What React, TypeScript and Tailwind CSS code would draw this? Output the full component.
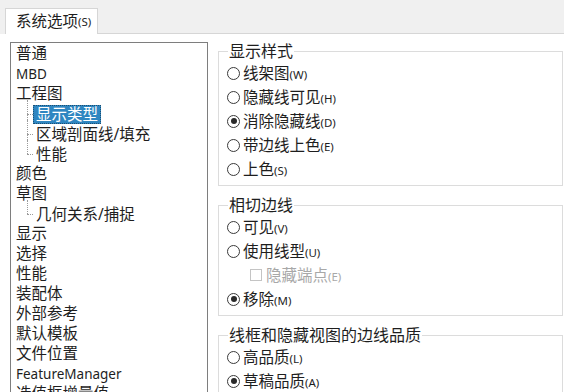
import React from "react";

type TreeItem = { label: string; small?: boolean; selected?: boolean; children?: TreeItem[] };

const TREE: TreeItem[] = [
  { label: "普通" },
  { label: "MBD", small: true },
  {
    label: "工程图",
    children: [{ label: "显示类型", selected: true }, { label: "区域剖面线/填充" }, { label: "性能" }],
  },
  { label: "颜色" },
  { label: "草图", children: [{ label: "几何关系/捕捉" }] },
  { label: "显示" },
  { label: "选择" },
  { label: "性能" },
  { label: "装配体" },
  { label: "外部参考" },
  { label: "默认模板" },
  { label: "文件位置" },
  { label: "FeatureManager", small: true },
  { label: "选值框增量值" },
];

function Label({ text, disabled }: { text: string; disabled?: boolean }) {
  const m = text.match(/^(.*)(\([A-Z]\))$/);
  const main = m ? m[1] : text;
  const key = m ? m[2] : "";
  return (
    <span className={disabled ? "text-[#a8a8a8]" : "text-[#1e1e1e]"}>
      <span className="text-[15.5px]">{main}</span>
      {key && <span className="text-[11.5px]">{key}</span>}
    </span>
  );
}

function Radio({ label, checked }: { label: string; checked?: boolean }) {
  return (
    <div className="flex h-6 items-center">
      <span className="mr-[3px] flex h-[13px] w-[13px] items-center justify-center rounded-full border border-[#3a3a3a] bg-white">
        {checked && <span className="h-[6px] w-[6px] rounded-full bg-[#2a2a2a]" />}
      </span>
      <Label text={label} />
    </div>
  );
}

function Group({ title, children }: { title: string; children: React.ReactNode }) {
  return (
    <fieldset className="border border-[#dcdcdc] pb-1 pl-2">
      <legend className="ml-px px-px text-[16px] leading-5 text-[#1e1e1e]">{title}</legend>
      {children}
    </fieldset>
  );
}

function ChildRow({ item, last }: { item: TreeItem; last: boolean }) {
  return (
    <div className="flex h-5 items-center">
      <div className="relative ml-4 h-5 w-[6px] shrink-0">
        <span
          className={`absolute left-0 -top-1 border-l border-dotted border-[#9a9a9a] ${last ? "h-[14px]" : "h-6"}`}
        />
        <span className="absolute left-0 top-[10px] w-[6px] border-t border-dotted border-[#9a9a9a]" />
      </div>
      <span
        className={`px-[3px] leading-[19px] text-[15.5px] ${
          item.selected ? "bg-[#2f86c1] text-white outline outline-1 outline-dotted outline-[#1b4f72] -outline-offset-1" : "text-[#1e1e1e]"
        }`}
      >
        {item.label}
      </span>
    </div>
  );
}

export default function App() {
  return (
    <div
      className="h-[392px] w-[564px] overflow-hidden bg-white"
      style={{ fontFamily: '"Noto Sans", "Noto Sans CJK SC", sans-serif' }}
    >
      {/* tab strip */}
      <div className="flex h-[34px] items-end bg-[#f0f0f0] pl-[5px]">
        <div className="flex h-[26px] w-[93px] items-center border border-b-0 border-[#d6d6d6] bg-white pl-[10px] text-[#1e1e1e]">
          <span className="text-[15.5px]">系统选项</span>
          <span className="text-[11.5px]">(S)</span>
        </div>
        <div className="h-full flex-1 border-b border-[#d6d6d6]" />
      </div>

      <div className="flex">
        {/* tree */}
        <div className="ml-[10px] mt-2 h-[400px] w-[198px] shrink-0 border border-[#7e7e7e] bg-white pl-[5px] pt-px">
          {TREE.map((item, i) => (
            <div key={i}>
              <div
                className={`flex h-5 items-center text-[#1e1e1e] ${item.small ? "text-[13.5px]" : "text-[15.5px]"}`}
              >
                {item.label}
              </div>
              {item.children && (
                <div className="-ml-[5px]">
                  {item.children.map((c, j) => (
                    <ChildRow key={j} item={c} last={j === item.children!.length - 1} />
                  ))}
                </div>
              )}
            </div>
          ))}
        </div>

        {/* options */}
        <div className="ml-[10px] mt-[7px] flex w-[345px] shrink-0 flex-col gap-[9px]">
          <Group title="显示样式">
            <Radio label="线架图(W)" />
            <Radio label="隐藏线可见(H)" />
            <Radio label="消除隐藏线(D)" checked />
            <Radio label="带边线上色(E)" />
            <Radio label="上色(S)" />
          </Group>
          <Group title="相切边线">
            <Radio label="可见(V)" />
            <Radio label="使用线型(U)" />
            <div className="flex h-6 items-center pl-[23px]">
              <span className="mr-[4px] h-[12px] w-[12px] border border-[#c4c4c4] bg-white" />
              <Label text="隐藏端点(E)" disabled />
            </div>
            <Radio label="移除(M)" checked />
          </Group>
          <Group title="线框和隐藏视图的边线品质">
            <Radio label="高品质(L)" />
            <Radio label="草稿品质(A)" checked />
          </Group>
        </div>
      </div>
    </div>
  );
}
